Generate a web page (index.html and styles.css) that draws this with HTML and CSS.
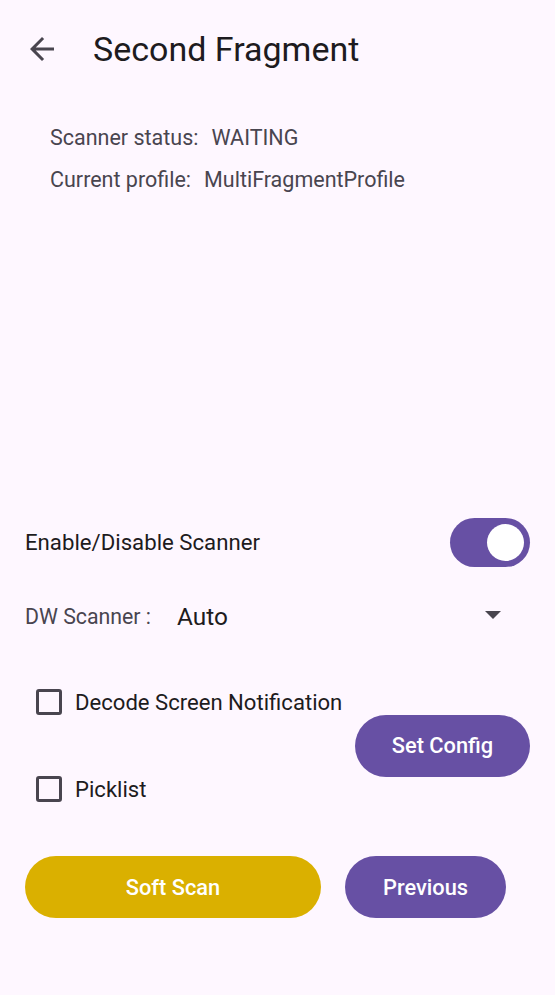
FILE: index.html
```html
<!DOCTYPE html>
<html>
<head>
<meta charset="utf-8">
<link rel="stylesheet" href="styles.css">
</head>
<body>
<div class="app">
  <header class="topbar">
    <svg class="back" width="36" height="36" viewBox="0 0 24 24"><path d="M20 11H7.83l5.59-5.59L12 4l-8 8 8 8 1.41-1.41L7.83 13H20v-2z" fill="#49454F"/></svg>
    <h1 class="title">Second Fragment</h1>
  </header>
  <section class="status">
    <div class="status-row"><span class="k">Scanner status:</span><span class="v">WAITING</span></div>
    <div class="status-row"><span class="k">Current profile:</span><span class="v">MultiFragmentProfile</span></div>
  </section>
  <div class="spacer"></div>
  <section class="controls">
    <div class="row enable">
      <span class="label">Enable/Disable Scanner</span>
      <div class="switch"><div class="thumb"></div></div>
    </div>
    <div class="row dw">
      <span class="dw-label">DW Scanner :</span>
      <span class="dw-value">Auto</span>
      <svg class="caret" width="16" height="10" viewBox="0 0 16 10"><path d="M0 0h16L8 8z" fill="#49454F"/></svg>
    </div>
    <div class="config">
      <div class="checks">
        <label class="check"><span class="box"></span><span>Decode Screen Notification</span></label>
        <label class="check"><span class="box"></span><span>Picklist</span></label>
      </div>
      <button class="btn purple setcfg">Set Config</button>
    </div>
    <div class="actions">
      <button class="btn yellow soft">Soft Scan</button>
      <button class="btn purple prev">Previous</button>
    </div>
  </section>
</div>
</body>
</html>
```
FILE: styles.css
```css
* { box-sizing: border-box; }
html, body { margin: 0; padding: 0; }
body {
  background: #FEF7FF;
  font-family: Roboto, "Noto Sans", sans-serif;
  color: #1D1B20;
  width: 555px;
  height: 995px;
  overflow: hidden;
}
.app { display: flex; flex-direction: column; height: 995px; }
.topbar {
  display: flex;
  align-items: center;
  height: 98px;
  padding-left: 24px;
}
.back { flex: none; }
.title {
  margin: 0 0 0 33px;
  font-size: 34px;
  font-weight: 400;
  color: #1D1B20;
}
.status { padding: 18px 0 0 50px; color: #49454F; font-size: 21.5px; }
.status-row { height: 42px; display: flex; align-items: center; }
.status-row .k { margin-right: 13px; }
.spacer { flex: 1; }
.controls { padding: 0 25px 77px 25px; }
.row { display: flex; align-items: center; }
.enable { height: 50px; justify-content: space-between; }
.label { font-size: 22.2px; color: #1D1B20; }
.switch {
  width: 80px; height: 49px; border-radius: 25px;
  background: #6750A4;
  display: flex; align-items: center; justify-content: flex-end;
  padding-right: 6px;
}
.thumb { width: 37px; height: 37px; border-radius: 50%; background: #fff; }
.dw { height: 48px; margin-top: 25px; }
.dw-label { font-size: 21.3px; color: #49454F; width: 152px; }
.dw-value { font-size: 24.4px; color: #1D1B20; flex: 1; }
.caret { margin-right: 29px; }
.config { display: flex; align-items: center; justify-content: space-between; margin-top: 49px; }
.checks { display: flex; flex-direction: column; gap: 61px; padding-left: 11px; }
.check { display: flex; align-items: center; font-size: 22.1px; color: #1D1B20; height: 26px; }
.box {
  width: 26px; height: 26px; border: 3px solid #49454F; border-radius: 3px;
  margin-right: 13px;
}
.btn {
  border: none; border-radius: 31px; height: 62px;
  font-family: Roboto, sans-serif; font-size: 21.8px; font-weight: 500;
  color: #fff;
}
.purple { background: #6750A4; }
.yellow { background: #DAB000; }
.setcfg { width: 175px; }
.actions { display: flex; margin-top: 54px; gap: 24px; }
.soft { width: 296px; }
.prev { width: 161px; }
```
